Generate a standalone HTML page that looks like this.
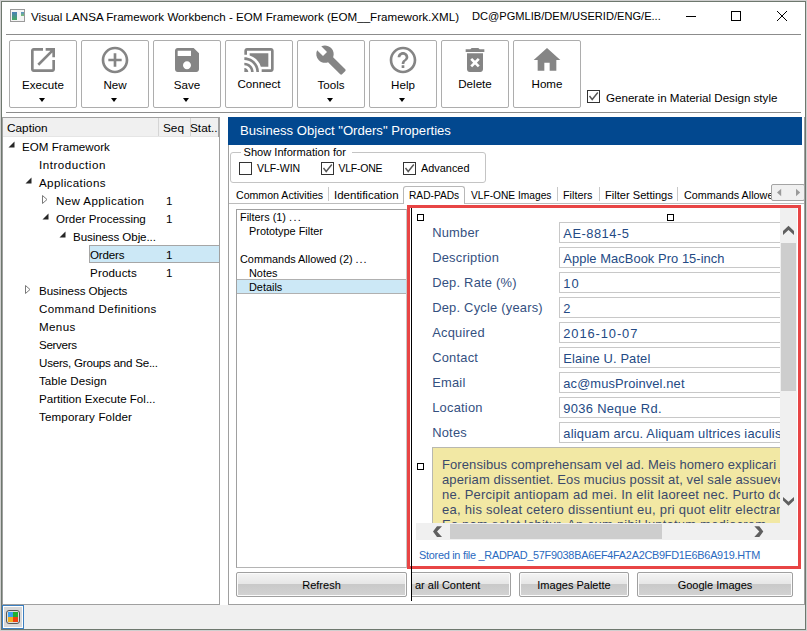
<!DOCTYPE html>
<html><head><meta charset="utf-8">
<style>
*{box-sizing:border-box;margin:0;padding:0}
html,body{width:807px;height:631px;overflow:hidden;background:#cfcfcf;font-family:"Liberation Sans",sans-serif;color:#000}
.a{position:absolute}
.t{position:absolute;white-space:pre;line-height:1}
#win{left:1px;top:1px;width:805px;height:629px;border:1px solid #6e786e;background:#fff}
.hsep{height:1px;background:#8c8c8c}
.tb{position:absolute;top:40px;width:68px;height:68px;border:1px solid #adadad;border-radius:2px;background:#fff}
.tb svg{position:absolute;left:16.5px;top:3px;width:32px;height:32px}
.tb .lb{position:absolute;left:0;width:66px;text-align:center;font-size:11.6px;top:37px;line-height:14px}
.tb .dd{position:absolute;left:29px;top:57px;width:0;height:0;border-left:3.5px solid transparent;border-right:3.5px solid transparent;border-top:4px solid #000}
.cb{width:13px;height:13px;border:1px solid #333;background:#fff}
.cb svg{position:absolute;left:0;top:0}
.tsep{top:187px;width:1px;height:14px;background:#c8c8c8}
.fl{font-size:10.9px}
.btn{height:25px;border:1px solid #a0a0a0;border-radius:2px;background:linear-gradient(#f4f4f4 0%,#e6e6e6 48%,#c9c9c9 50%,#d3d3d3 100%);box-shadow:inset 0 0 0 1px #fbfbfb;overflow:hidden}
.btn span{position:absolute;left:0;right:0;top:7px;text-align:center;font-size:11px;line-height:1;white-space:pre}
.lab{font-size:12.9px;color:#34507f;letter-spacing:0.22px}
.val{font-size:12.9px;color:#244a84;letter-spacing:0.12px}
.inp{width:240px;height:21px;border:1px solid #c8c8c8;background:#fff}
.note{font-size:13px;line-height:15px;color:#3b4a6b;white-space:pre;letter-spacing:0.09px}
.hd{width:7px;height:7px;border:1px solid #000;background:#fff}
</style></head><body>
<div id="win" class="a"></div>

<!-- title bar -->
<div class="a" style="left:10px;top:9px;width:15px;height:13px;border:1px solid #9a9a9a;background:#f4f4f4">
  <div class="a" style="left:1px;top:2px;width:5px;height:8px;background:linear-gradient(#4a7fb8,#45a860)"></div>
  <div class="a" style="left:10px;top:2px;width:3px;height:4px;background:linear-gradient(#5a8fc8,#7ac070)"></div>
</div>
<div class="t" style="left:31px;top:11px;font-size:11.6px">Visual LANSA Framework Workbench - EOM Framework (EOM__Framework.XML)</div>
<div class="t" style="left:472px;top:11px;font-size:11.1px">DC@PGMLIB/DEM/USERID/ENG/E...</div>
<div class="a" style="left:686px;top:16px;width:10px;height:1px;background:#000"></div>
<div class="a" style="left:731px;top:11px;width:10px;height:10px;border:1px solid #000"></div>
<svg class="a" style="left:776px;top:10px" width="12" height="12" viewBox="0 0 12 12"><path d="M1 1L11 11M11 1L1 11" stroke="#000" stroke-width="1" fill="none"/></svg>
<div class="a hsep" style="left:6px;top:34px;width:795px"></div>

<!-- toolbar -->
<div class="tb" style="left:9px"><svg viewBox="0 0 24 24"><path fill="#858585" d="M19 19H5V5h7V3H5c-1.11 0-2 .9-2 2v14c0 1.1.89 2 2 2h14c1.1 0 2-.9 2-2v-7h-2v7zM14 3v2h3.59l-9.83 9.83 1.41 1.41L19 6.41V10h2V3h-7z"/></svg><div class="lb">Execute</div><div class="dd"></div></div>
<div class="tb" style="left:81px"><svg viewBox="0 0 24 24"><path fill="#858585" d="M13 7h-2v4H7v2h4v4h2v-4h4v-2h-4V7zm-1-5C6.48 2 2 6.48 2 12s4.48 10 10 10 10-4.48 10-10S17.52 2 12 2zm0 18c-4.41 0-8-3.59-8-8s3.59-8 8-8 8 3.59 8 8-3.59 8-8 8z"/></svg><div class="lb">New</div><div class="dd"></div></div>
<div class="tb" style="left:153px"><svg viewBox="0 0 24 24"><path fill="#858585" d="M17 3H5c-1.11 0-2 .9-2 2v14c0 1.1.89 2 2 2h14c1.1 0 2-.9 2-2V7l-4-4zm-5 16c-1.66 0-3-1.34-3-3s1.34-3 3-3 3 1.34 3 3-1.34 3-3 3zm3-10H5V5h10v4z"/></svg><div class="lb">Save</div><div class="dd"></div></div>
<div class="tb" style="left:225px"><svg viewBox="0 0 24 24"><path fill="#858585" d="M1 18v3h3c0-1.66-1.34-3-3-3zm0-4v2c2.76 0 5 2.24 5 5h2c0-3.87-3.13-7-7-7zm18-7H5v1.63c3.96 1.28 7.09 4.41 8.37 8.37H19V7zM1 10v2c4.97 0 9 4.03 9 9h2c0-6.08-4.93-11-11-11zm20-7H3c-1.1 0-2 .9-2 2v3h2V5h18v14h-7v2h7c1.1 0 2-.9 2-2V5c0-1.1-.9-2-2-2z"/></svg><div class="lb" style="top:36px">Connect</div></div>
<div class="tb" style="left:297px"><svg viewBox="0 0 24 24"><path fill="#858585" d="M22.7 19l-9.1-9.1c.9-2.3.4-5-1.5-6.9-2-2-5-2.4-7.4-1.3L9 6 6 9 1.6 4.7C.4 7.1.9 10.1 2.9 12.1c1.9 1.9 4.6 2.4 6.9 1.5l9.1 9.1c.4.4 1 .4 1.4 0l2.3-2.3c.5-.4.5-1.1.1-1.4z"/></svg><div class="lb">Tools</div><div class="dd"></div></div>
<div class="tb" style="left:369px"><svg viewBox="0 0 24 24"><path fill="#858585" d="M11 18h2v-2h-2v2zm1-16C6.48 2 2 6.48 2 12s4.48 10 10 10 10-4.48 10-10S17.52 2 12 2zm0 18c-4.41 0-8-3.59-8-8s3.59-8 8-8 8 3.59 8 8-3.59 8-8 8zm0-14c-2.21 0-4 1.79-4 4h2c0-1.1.9-2 2-2s2 .9 2 2c0 2-3 1.75-3 5h2c0-2.25 3-2.5 3-5 0-2.21-1.79-4-4-4z"/></svg><div class="lb">Help</div><div class="dd"></div></div>
<div class="tb" style="left:441px"><svg viewBox="0 0 24 24"><path fill="#858585" d="M6 19c0 1.1.9 2 2 2h8c1.1 0 2-.9 2-2V7H6v12zm2.46-7.12l1.41-1.41L12 12.59l2.12-2.12 1.41 1.41L13.41 14l2.12 2.12-1.41 1.41L12 15.41l-2.12 2.12-1.41-1.41L10.59 14l-2.13-2.12zM15.5 4l-1-1h-5l-1 1H5v2h14V4z"/></svg><div class="lb" style="top:36px">Delete</div></div>
<div class="tb" style="left:513px"><svg viewBox="0 0 24 24"><path fill="#858585" d="M10 20v-6h4v6h5v-8h3L12 3 2 12h3v8z"/></svg><div class="lb" style="top:36px">Home</div></div>

<div class="a" style="left:587px;top:90px;width:13px;height:13px;border:1px solid #333;background:#fff"></div>
<svg class="a" style="left:587px;top:90px" width="13" height="13" viewBox="0 0 13 13"><path d="M2.5 6L5.2 9.5L10.8 2.5" stroke="#555" stroke-width="1.4" fill="none"/></svg>
<div class="t" style="left:606px;top:92px;font-size:11.6px">Generate in Material Design style</div>
<div class="a hsep" style="left:6px;top:112px;width:795px"></div>


<!-- tree panel -->
<div class="a" style="left:2px;top:117px;width:218px;height:488px;border:1px solid #a0a0a0;background:#fff"></div>
<div class="a" style="left:3px;top:118px;width:216px;height:19px;background:#f0f0f0;border-bottom:1px solid #e5e5e5"></div>
<div class="a" style="left:158px;top:118px;width:1px;height:18px;background:#d5d5d5"></div>
<div class="a" style="left:190px;top:118px;width:1px;height:18px;background:#d5d5d5"></div>
<div class="a" style="left:218px;top:117px;width:2px;height:20px;background:#a0a0a0"></div>
<div class="t" style="left:7px;top:123px;font-size:11.8px">Caption</div>
<div class="t" style="left:163px;top:123px;font-size:11.8px">Seq</div>
<div class="t" style="left:190px;top:123px;font-size:11.8px">Stat..</div>
<div class="a" style="left:89px;top:245px;width:130px;height:18px;background:#cce8f6;border:1px solid #a6a6a6;border-right:none"></div>
<div class="t" style="left:22px;top:141px;font-size:11.6px;letter-spacing:0.017px">EOM Framework</div>
<svg class="a" style="left:8px;top:141px" width="7" height="7" viewBox="0 0 7 7"><path d="M6.5 0.5V6.5H0.5Z" fill="#262626"/></svg>
<div class="t" style="left:39px;top:159px;font-size:11.6px;letter-spacing:0.527px">Introduction</div>
<div class="t" style="left:39px;top:177px;font-size:11.6px;letter-spacing:0.364px">Applications</div>
<svg class="a" style="left:25px;top:177px" width="7" height="7" viewBox="0 0 7 7"><path d="M6.5 0.5V6.5H0.5Z" fill="#262626"/></svg>
<div class="t" style="left:56px;top:195px;font-size:11.6px;letter-spacing:0.393px">New Application</div>
<div class="t" style="left:166px;top:195px;font-size:11.6px">1</div>
<svg class="a" style="left:42px;top:195px" width="7" height="9" viewBox="0 0 7 9"><path d="M0.5 0.5L5 4.5L0.5 8.5Z" fill="none" stroke="#7a7a7a" stroke-width="1"/></svg>
<div class="t" style="left:56px;top:213px;font-size:11.6px;letter-spacing:-0.026px">Order Processing</div>
<div class="t" style="left:166px;top:213px;font-size:11.6px">1</div>
<svg class="a" style="left:42px;top:213px" width="7" height="7" viewBox="0 0 7 7"><path d="M6.5 0.5V6.5H0.5Z" fill="#262626"/></svg>
<div class="t" style="left:73px;top:231px;font-size:11.6px;letter-spacing:-0.100px">Business Obje...</div>
<svg class="a" style="left:59px;top:231px" width="7" height="7" viewBox="0 0 7 7"><path d="M6.5 0.5V6.5H0.5Z" fill="#262626"/></svg>
<div class="t" style="left:90px;top:249px;font-size:11.6px;letter-spacing:-0.2px">Orders</div>
<div class="t" style="left:166px;top:249px;font-size:11.6px">1</div>
<div class="t" style="left:90px;top:267px;font-size:11.6px;letter-spacing:0.143px">Products</div>
<div class="t" style="left:166px;top:267px;font-size:11.6px">1</div>
<div class="t" style="left:39px;top:285px;font-size:11.6px;letter-spacing:-0.080px">Business Objects</div>
<svg class="a" style="left:25px;top:285px" width="7" height="9" viewBox="0 0 7 9"><path d="M0.5 0.5L5 4.5L0.5 8.5Z" fill="none" stroke="#7a7a7a" stroke-width="1"/></svg>
<div class="t" style="left:39px;top:303px;font-size:11.6px;letter-spacing:0.361px">Command Definitions</div>
<div class="t" style="left:39px;top:321px;font-size:11.6px;letter-spacing:0.375px">Menus</div>
<div class="t" style="left:39px;top:339px;font-size:11.6px;letter-spacing:-0.316px">Servers</div>
<div class="t" style="left:39px;top:357px;font-size:11.6px;letter-spacing:-0.241px">Users, Groups and Se...</div>
<div class="t" style="left:39px;top:375px;font-size:11.6px;letter-spacing:0.054px">Table Design</div>
<div class="t" style="left:39px;top:393px;font-size:11.6px;letter-spacing:-0.004px">Partition Execute Fol...</div>
<div class="t" style="left:39px;top:411px;font-size:11.6px;letter-spacing:0.140px">Temporary Folder</div>

<!-- right panel -->
<div class="a" style="left:228px;top:117px;width:577px;height:488px;border:1px solid #a0a0a0;border-top:none;background:#fff"></div>
<div class="a" style="left:228px;top:117px;width:574px;height:28px;background:#02488f"></div>
<div class="t" style="left:240px;top:123.5px;font-size:13.1px;color:#fff">Business Object "Orders" Properties</div>
<!-- groupbox -->
<div class="a" style="left:230px;top:152px;width:256px;height:31px;border:1px solid #c4c4c4;border-radius:3px"></div>
<div class="a" style="left:241px;top:148px;width:111px;height:10px;background:#fff"></div>
<div class="t" style="left:243.5px;top:147px;font-size:11.1px">Show Information for</div>
<div class="a cb" style="left:239px;top:162px"></div>
<div class="t" style="left:257px;top:163px;font-size:10.5px">VLF-WIN</div>
<div class="a cb" style="left:321px;top:162px"><svg width="11" height="11" viewBox="0 0 11 11"><path d="M1.5 5L4.2 8.5L9.8 1.5" stroke="#555" stroke-width="1.4" fill="none"/></svg></div>
<div class="t" style="left:338.5px;top:163px;font-size:10.5px;letter-spacing:-0.25px">VLF-ONE</div>
<div class="a cb" style="left:403px;top:162px"><svg width="11" height="11" viewBox="0 0 11 11"><path d="M1.5 5L4.2 8.5L9.8 1.5" stroke="#555" stroke-width="1.4" fill="none"/></svg></div>
<div class="t" style="left:421px;top:163px;font-size:10.9px">Advanced</div>
<!-- tabs -->
<div class="a" style="left:229px;top:203px;width:575px;height:1px;background:#bcbcbc"></div>
<div class="a" style="left:403px;top:186px;width:62px;height:18px;border:1px solid #b8b8b8;border-bottom:none;border-radius:3px 3px 0 0;background:#fff"></div>
<div class="t" style="left:236px;top:190px;font-size:10.6px">Common Activities</div>
<div class="a tsep" style="left:328px"></div>
<div class="t" style="left:334px;top:190px;font-size:11.5px">Identification</div>
<div class="t" style="left:409px;top:191px;font-size:10.2px">RAD-PADs</div>
<div class="t" style="left:471px;top:191px;font-size:10.2px">VLF-ONE Images</div>
<div class="a tsep" style="left:557px"></div>
<div class="t" style="left:563px;top:190px;font-size:10.8px">Filters</div>
<div class="a tsep" style="left:599px"></div>
<div class="t" style="left:605px;top:190px;font-size:11.1px">Filter Settings</div>
<div class="a tsep" style="left:677px"></div>
<div class="a" style="left:683px;top:186px;width:88px;height:16px;overflow:hidden"><div class="t" style="left:1px;top:4px;font-size:10.8px">Commands Allowed</div></div>
<div class="a" style="left:771px;top:184px;width:34px;height:17px;border:1px solid #a4a4a4;border-radius:2px;background:#f0f0f0"></div>
<svg class="a" style="left:771px;top:184px" width="34" height="17" viewBox="0 0 34 17"><path d="M10.2 4.8V12.2L6 8.5Z" fill="#9a9a9a"/><path d="M25 4.8V12.2L29.2 8.5Z" fill="#9a9a9a"/></svg>
<!-- filter list -->
<div class="a" style="left:236px;top:209px;width:171px;height:359px;border:1px solid #a0a0a0;border-right-color:#c8c8c8;border-bottom-color:#b4b4b4"></div>
<div class="a" style="left:237px;top:279px;width:169px;height:15px;background:#cce8f6;border-top:1px solid #b0b0b0;border-bottom:1px solid #b0b0b0"></div>
<div class="t fl" style="left:240px;top:212px">Filters (1) <span style="letter-spacing:1.4px">...</span></div>
<div class="t fl" style="left:249px;top:226px">Prototype Filter</div>
<div class="t fl" style="left:240px;top:254px">Commands Allowed (2) <span style="letter-spacing:0.9px">...</span></div>
<div class="t fl" style="left:249px;top:268px">Notes</div>
<div class="t fl" style="left:249px;top:282px">Details</div>
<div class="a btn" style="left:236px;top:572px;width:171px"><span>Refresh</span></div>


<!-- radpad -->
<div class="a" style="left:407px;top:205px;width:394px;height:364px;border:3px solid #e84545"></div>
<div class="a" style="left:412px;top:208px;width:385px;height:358px;overflow:hidden;background:#fff">
<div class="t lab" style="left:20.2px;top:19px">Number</div>
<div class="a inp" style="left:147px;top:14px"></div>
<div class="t val" style="left:151.3px;top:20px;letter-spacing:0.49px">AE-8814-5</div>
<div class="t lab" style="left:20.2px;top:44px">Description</div>
<div class="a inp" style="left:147px;top:39px"></div>
<div class="t val" style="left:151.3px;top:45px;letter-spacing:0.06px">Apple MacBook Pro 15-inch</div>
<div class="t lab" style="left:20.2px;top:69px">Dep. Rate (%)</div>
<div class="a inp" style="left:147px;top:64px"></div>
<div class="t val" style="left:151.3px;top:70px;letter-spacing:1.0px">10</div>
<div class="t lab" style="left:20.2px;top:94px">Dep. Cycle (years)</div>
<div class="a inp" style="left:147px;top:89px"></div>
<div class="t val" style="left:151.3px;top:95px">2</div>
<div class="t lab" style="left:20.2px;top:119px">Acquired</div>
<div class="a inp" style="left:147px;top:114px"></div>
<div class="t val" style="left:151.3px;top:120px;letter-spacing:0.9px">2016-10-07</div>
<div class="t lab" style="left:20.2px;top:144px">Contact</div>
<div class="a inp" style="left:147px;top:139px"></div>
<div class="t val" style="left:151.3px;top:145px">Elaine U. Patel</div>
<div class="t lab" style="left:20.2px;top:169px">Email</div>
<div class="a inp" style="left:147px;top:164px"></div>
<div class="t val" style="left:151.3px;top:170px">ac@musProinvel.net</div>
<div class="t lab" style="left:20.2px;top:194px">Location</div>
<div class="a inp" style="left:147px;top:189px"></div>
<div class="t val" style="left:151.3px;top:195px;letter-spacing:0.33px">9036 Neque Rd.</div>
<div class="t lab" style="left:20.2px;top:219px">Notes</div>
<div class="a inp" style="left:147px;top:214px"></div>
<div class="t val" style="left:151.3px;top:220px;letter-spacing:0.2px">aliquam arcu. Aliquam ultrices iaculis nulla</div>
<div class="a" style="left:20px;top:239px;width:360px;height:90px;border:1px solid #b8b8b0;background:#f2e8a4"></div>
<div class="a note" style="left:30px;top:249px;letter-spacing:0.09px">Forensibus comprehensam vel ad. Meis homero explicari</div>
<div class="a note" style="left:30px;top:264px;letter-spacing:0.13px">aperiam dissentiet. Eos mucius possit at, vel sale assueverit</div>
<div class="a note" style="left:30px;top:279px;letter-spacing:0.24px">ne. Percipit antiopam ad mei. In elit laoreet nec. Purto dolor</div>
<div class="a note" style="left:30px;top:294px;letter-spacing:0.27px">ea, his soleat cetero dissentiunt eu, pri quot elitr electram</div>
<div class="a note" style="left:30px;top:309px;letter-spacing:0.2px">Eo nam solet lobitur. An eum nibil luptatum mediocrem</div>
<div class="a hd" style="left:5px;top:6px"></div>
<div class="a hd" style="left:255px;top:6px"></div>
<div class="a hd" style="left:5px;top:255px"></div>
<!-- vscroll -->
<div class="a" style="left:368px;top:0px;width:17px;height:332px;background:#f0f0f0"></div>
<svg class="a" style="left:368px;top:12px" width="17" height="17" viewBox="0 0 17 17"><path d="M3 11L8.5 5.8L14 11V15L8.5 10L3 15Z" fill="#5f5f5f"/></svg>
<div class="a" style="left:369px;top:35px;width:15px;height:148px;background:#cdcdcd"></div>
<svg class="a" style="left:368px;top:282px" width="17" height="17" viewBox="0 0 17 17"><path d="M3 7L8.5 11.7L14 7V10.5L8.5 15.7L3 10.5Z" fill="#5f5f5f"/></svg>
<!-- hscroll -->
<div class="a" style="left:4px;top:315px;width:381px;height:17px;background:#f0f0f0"></div>
<svg class="a" style="left:16px;top:315px" width="17" height="17" viewBox="0 0 17 17"><path d="M5 8.4L9 3.2H14L9 8.4L14 13.9H9Z" fill="#5f5f5f"/></svg>
<div class="a" style="left:38px;top:316px;width:212px;height:15px;background:#cdcdcd"></div>
<svg class="a" style="left:337px;top:315px" width="17" height="17" viewBox="0 0 17 17"><path d="M14.3 8.4L10.3 3.2H5.3L10.3 8.4L5.3 13.9H10.3Z" fill="#5f5f5f"/></svg>
<div class="t" style="left:7px;top:342px;font-size:10.9px;letter-spacing:-0.27px;color:#2a6ac0">Stored in file _RADPAD_57F9038BA6EF4FA2A2CB9FD1E6B6A919.HTM</div>
</div>
<div class="a" style="left:411px;top:208px;width:1px;height:393px;background:#000"></div>
<!-- bottom buttons -->
<div class="a" style="left:412px;top:569px;width:392px;height:35px;overflow:hidden">
<div class="a btn" style="left:-44px;top:3px;width:143px"><span style="left:46px;text-align:left">ar all Content</span></div>
<div class="a btn" style="left:107px;top:3px;width:110px"><span>Images Palette</span></div>
<div class="a btn" style="left:225px;top:3px;width:156px"><span>Google Images</span></div>
</div>

<!-- status bar -->
<div class="a" style="left:2px;top:605px;width:803px;height:24px;background:#f0f0f0"></div>

<div class="a" style="left:2px;top:605px;width:22px;height:24px;border:1px solid #3c7fc0;background:#d8d8d8;box-shadow:inset 0 0 0 1px #fff"></div>
<div class="a" style="left:6px;top:610px;width:14px;height:14px;border:1px solid #555;border-radius:3px;background:#ddd"></div>
<div class="a" style="left:8px;top:612px;width:5px;height:5px;background:#3aa0f0"></div>
<div class="a" style="left:13px;top:612px;width:5px;height:5px;background:#20b030"></div>
<div class="a" style="left:8px;top:617px;width:5px;height:5px;background:#f0b020"></div>
<div class="a" style="left:13px;top:617px;width:5px;height:5px;background:#f04010"></div>
</body></html>
